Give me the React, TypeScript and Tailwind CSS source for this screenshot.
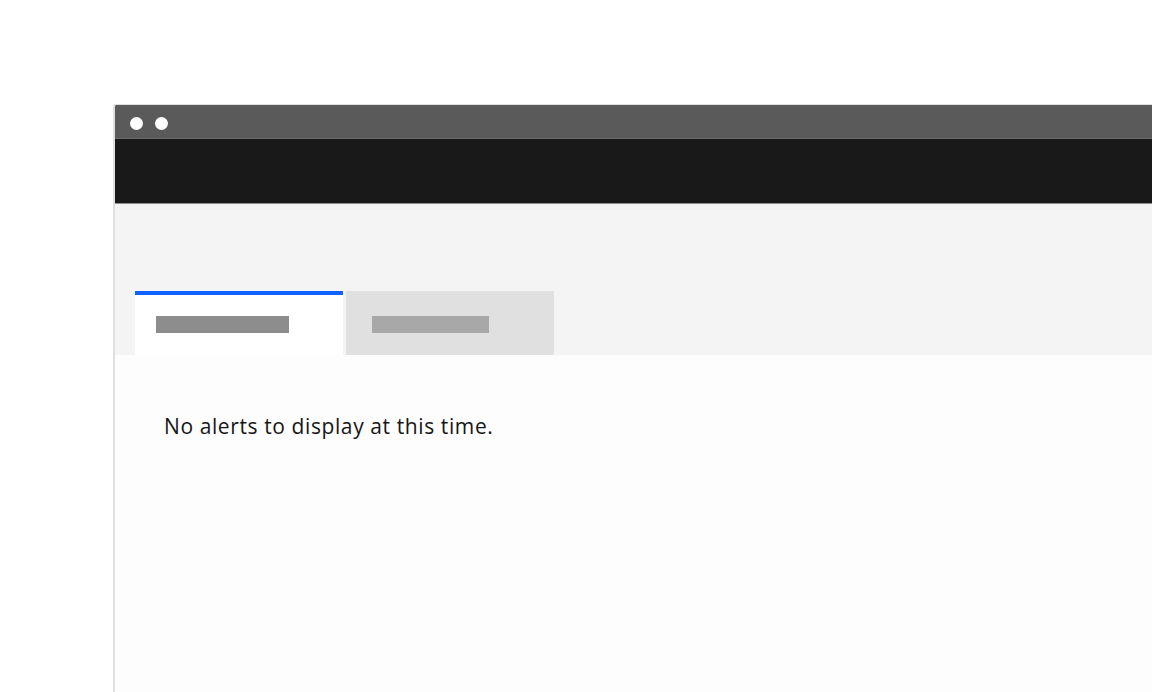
import React from "react";

const App: React.FC = () => {
  return (
    <div className="w-[1152px] h-[692px] overflow-hidden bg-white pt-[104px] pl-[113px]">
      <div className="h-full border-l-2 border-t border-[#e0e0e0] rounded-tl-[3px] overflow-hidden flex flex-col">
        {/* title bar */}
        <div className="h-[34px] shrink-0 bg-[#5a5a5a] border-b border-[#6a6a6a] flex items-center gap-[12px] pl-[15px] pt-[3px]">
          <span className="w-[13px] h-[13px] rounded-full bg-white" />
          <span className="w-[13px] h-[13px] rounded-full bg-white" />
        </div>
        {/* header */}
        <div className="h-[65px] shrink-0 bg-[#191919] border-b border-[#8d8d8d]" />
        {/* tab area */}
        <div className="h-[151px] shrink-0 bg-[#f4f4f4] flex items-end pl-[20px] gap-[3px]">
          <div className="w-[208px] h-[64px] bg-white border-t-4 border-[#0f62fe] pt-[21px] pl-[21px]">
            <div className="w-[133px] h-[17px] bg-[#8d8d8d]" />
          </div>
          <div className="w-[208px] h-[64px] bg-[#e0e0e0] pt-[25px] pl-[26px]">
            <div className="w-[117px] h-[17px] bg-[#a8a8a8]" />
          </div>
        </div>
        {/* content */}
        <div className="flex-1 bg-[#fdfdfd] pt-[57px] pl-[49px]">
          <p
            className="text-[21px] leading-[29px] text-[#161616] tracking-[0.6px]"
            style={{ fontFamily: '"Open Sans", "Noto Sans", sans-serif' }}
          >
            No alerts to display at this time.
          </p>
        </div>
      </div>
    </div>
  );
};

export default App;
